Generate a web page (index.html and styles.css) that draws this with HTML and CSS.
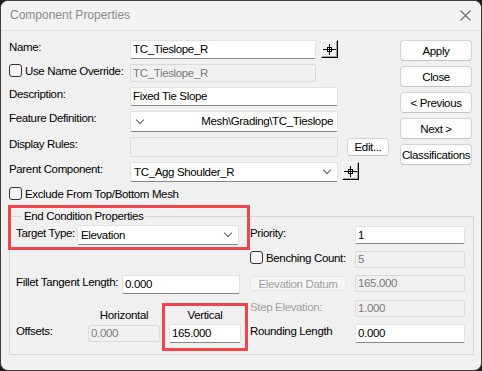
FILE: index.html
```html
<!DOCTYPE html>
<html>
<head>
<meta charset="utf-8">
<link rel="stylesheet" href="styles.css">
</head>
<body>
<div class="window">
  <div class="titlebar">
    <span class="title">Component Properties</span>
    <svg class="close" width="11" height="11" viewBox="0 0 11 11"><path d="M0.5 0.5L10.5 10.5M10.5 0.5L0.5 10.5" stroke="#6b6b6b" stroke-width="1.1" fill="none"/></svg>
  </div>
  <div class="content">
    <div class="top">
      <div class="form">
        <div class="lbl">Name:</div>
        <div class="cell">
          <div class="input w186">TC_Tieslope_R</div>
          <div class="pick ml5"><svg width="13" height="11" viewBox="0 0 13 11"><path d="M0 5.5H13M6.5 0V11" stroke="#000" fill="none"/><rect x="4.5" y="3.5" width="4" height="4" fill="none" stroke="#000"/></svg></div>
        </div>
        <div></div>

        <label class="lbl chk"><span class="box"></span>Use Name Override:</label>
        <div class="cell"><div class="input disabled w186 h18">TC_Tieslope_R</div></div>
        <div></div>

        <div class="lbl">Description:</div>
        <div class="cell"><div class="input w208">Fixed Tie Slope</div></div>
        <div></div>

        <div class="lbl">Feature Definition:</div>
        <div class="cell"><div class="input combo w208 h21"><span class="chev"></span><span class="grow right">Mesh\Grading\TC_Tieslope</span></div></div>
        <div></div>

        <div class="lbl">Display Rules:</div>
        <div class="cell"><div class="input disabled w208 h20"></div></div>
        <div class="cell"><div class="btn edit">Edit...</div></div>

        <div class="lbl">Parent Component:</div>
        <div class="cell"><div class="input combo w208 h20"><span class="grow">TC_Agg Shoulder_R</span><span class="chev"></span></div></div>
        <div class="cell"><div class="pick ml4 h19"><svg width="13" height="11" viewBox="0 0 13 11"><path d="M0 5.5H13M6.5 0V11" stroke="#000" fill="none"/><rect x="4.5" y="3.5" width="4" height="4" fill="none" stroke="#000"/></svg></div></div>

        <label class="lbl chk span3"><span class="box"></span>Exclude From Top/Bottom Mesh</label>
      </div>
      <div class="buttons">
        <div class="btn">Apply</div>
        <div class="btn">Close</div>
        <div class="btn">&lt; Previous</div>
        <div class="btn">Next &gt;</div>
        <div class="btn">Classifications</div>
      </div>
    </div>

    <fieldset class="group">
      <legend>End Condition Properties</legend>
      <div class="ggrid">
        <div class="gcell">
          <div class="lbl">Target Type:</div>
          <div class="input combo target"><span class="grow">Elevation</span><span class="chev"></span></div>
        </div>
        <div class="gcell">
          <div class="lbl rl">Priority:</div>
          <div class="input w110 h18">1</div>
        </div>

        <div class="gcell"></div>
        <div class="gcell">
          <label class="lbl rl chk"><span class="box"></span>Benching Count:</label>
          <div class="input disabled w110 h17">5</div>
        </div>

        <div class="gcell">
          <div class="lbl fl">Fillet Tangent Length:</div>
          <div class="input w118">0.000</div>
        </div>
        <div class="gcell">
          <div class="rl"><div class="btn dis datum">Elevation Datum</div></div>
          <div class="input disabled w110 h17">165.000</div>
        </div>

        <div class="gcell heads">
          <div class="off-lbl"></div>
          <div class="head">Horizontal</div>
          <div class="head mlv">Vertical</div>
        </div>
        <div class="gcell">
          <div class="lbl rl dimtext">Step Elevation:</div>
          <div class="input disabled w110 h17">1.000</div>
        </div>

        <div class="gcell">
          <div class="lbl off-lbl">Offsets:</div>
          <div class="input disabled w72 h17 mt1">0.000</div>
          <div class="input w72 mlv">165.000</div>
        </div>
        <div class="gcell">
          <div class="lbl rl">Rounding Length</div>
          <div class="input w110">0.000</div>
        </div>
      </div>
    </fieldset>

    <div class="hl hl-target"></div>
    <div class="hl hl-vertical"></div>
  </div>
</div>
</body>
</html>
```

FILE: styles.css
```css
* { box-sizing: border-box; }
html, body { margin: 0; padding: 0; background: #1e1e1e; }
body {
  font-family: "Liberation Sans", Arial, sans-serif;
  font-size: 11.5px;
  letter-spacing: -0.35px;
  color: #000;
}
.window {
  width: 482px;
  height: 371px;
  border: 1px solid #3d3d3d;
  border-radius: 8px;
  background: #f0f0f0;
  overflow: hidden;
  position: relative;
}
.titlebar {
  height: 30px;
  background: #f3f3f3;
  border-bottom: 1px solid #e3e3e3;
  display: flex;
  align-items: center;
  padding-left: 9px;
  padding-right: 10px;
}
.title {
  font-size: 12px;
  letter-spacing: 0;
  color: #8a8a8a;
  flex: 1;
  margin-top: -1px;
}
.close { margin-top: -1px; }

.content {
  position: relative;
  padding: 9px 7px 0 8px;
}
.top { display: flex; }
.form {
  display: grid;
  grid-template-columns: 121px 208px 52px;
  grid-template-rows: 19px 18px 19px 21px 20px 20px 16px;
  row-gap: 5px;
  width: 381px;
}
.cell { display: flex; align-items: flex-start; }
.lbl { line-height: 14px; white-space: nowrap; }
.chk { display: flex; align-items: flex-start; }
.span3 { grid-column: 1 / 4; }
.box {
  width: 13px;
  height: 13px;
  border: 1px solid #333;
  border-radius: 3px;
  background: #f7f7f7;
  margin-right: 3px;
  flex: none;
}
.input {
  height: 19px;
  background: #fff;
  border: 1px solid #e2e2e2;
  border-bottom-color: #868686;
  border-radius: 2px;
  padding: 0 2px;
  line-height: 17px;
  white-space: nowrap;
  overflow: hidden;
  display: flex;
  align-items: center;
  flex: none;
}
.input.disabled {
  background: #f0f0f0;
  border-color: #dadada;
  color: #7b7b7b;
}
.w186 { width: 186px; }
.w208 { width: 208px; }
.w110 { width: 110px; }
.w118 { width: 118px; }
.w72 { width: 72px; }
.h17 { height: 17px; }
.h18 { height: 18px; }
.h19 { height: 19px; }
.h20 { height: 20px; }
.h21 { height: 21px; }
.mt1 { margin-top: 1px; }
.ml4 { margin-left: 4px; }
.ml5 { margin-left: 5px; }

.combo { padding: 0 4px 0 3px; }
.grow { flex: 1; }
.right { text-align: right; }
.chev {
  width: 6px;
  height: 6px;
  border-right: 1px solid #5a5a5a;
  border-bottom: 1px solid #5a5a5a;
  transform: rotate(45deg);
  margin: -4px 3px 0 3px;
  flex: none;
}

.pick {
  width: 17px;
  height: 18px;
  background: #f0f0f0;
  border: 1px solid;
  border-color: #fff #000 #000 #fff;
  box-shadow: inset -1px -1px 0 #a0a0a0;
  display: flex;
  align-items: center;
  justify-content: center;
  flex: none;
}

.btn {
  height: 21px;
  background: #fdfdfd;
  border: 1px solid #d3d3d3;
  border-bottom-color: #c4c4c4;
  border-radius: 4px;
  display: flex;
  align-items: center;
  justify-content: center;
  white-space: nowrap;
}
.edit { width: 42px; height: 18px; margin-left: 9px; margin-top: 1px; }
.buttons {
  margin-left: 10px;
  width: 72px;
  display: flex;
  flex-direction: column;
  gap: 5px;
}

.group {
  margin: 6px 0 0 0;
  padding: 0 0 0 6px;
  border: 1px solid #d6d6d6;
  height: 146px;
}
.group legend {
  margin-left: 6px;
  padding: 0 2px;
  line-height: 14px;
}
.ggrid {
  display: grid;
  grid-template-columns: 225px 215px;
  grid-template-rows: 19px 19px 19px 19px 19px;
  column-gap: 9px;
  row-gap: 5.5px;
  margin-top: 3px;
}
.gcell { display: flex; align-items: flex-start; }
.rl { width: 105px; flex: none; }
.target { width: 162px; height: 20px; margin-left: 2px; margin-top: -1px; }
.fl { width: 106px; flex: none; }
.off-lbl { width: 72px; flex: none; }
.mlv { margin-left: 9px; }
.heads { align-items: flex-end; }
.head { width: 72px; text-align: center; line-height: 14px; margin-bottom: -3px; }
.dimtext { color: #a3a3a3; }
.btn.dis {
  width: 96px;
  height: 15px;
  background: #f6f6f6;
  border-color: #e6e6e6;
  color: #a0a0a0;
  border-radius: 3px;
  margin-top: 1px;
}

.hl {
  position: absolute;
  border: 3px solid #f0464b;
  pointer-events: none;
}
.hl-target { left: 7px; top: 174px; width: 242px; height: 45px; }
.hl-vertical { left: 161px; top: 272px; width: 86px; height: 48px; }
```
